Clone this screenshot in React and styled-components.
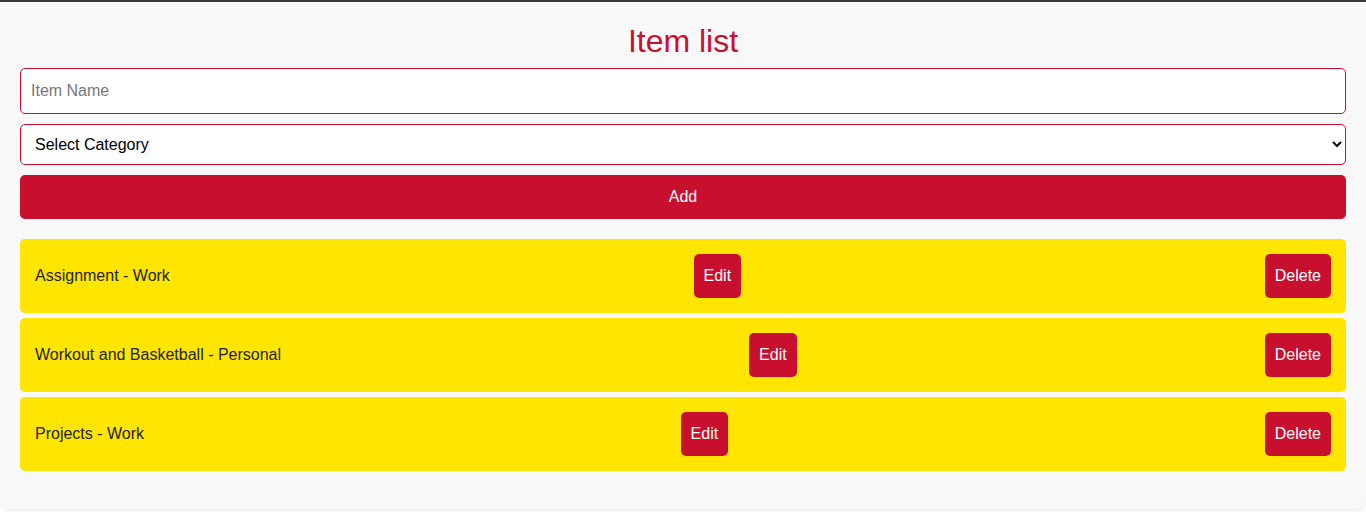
import React, { useState } from 'react';
import styled, { createGlobalStyle } from 'styled-components';

const GlobalStyle = createGlobalStyle`
  * {
    box-sizing: border-box;
  }

  body {
    margin: 0;
    background: #ffffff;
    font-family: 'Liberation Sans', Arial, sans-serif;
  }
`;

const StyledPage = styled.div`
  border-top: 2px solid #3b3b3b;
  padding-bottom: 6px;
`;

const StyledCard = styled.div`
  background: #f8f8f8;
  border-radius: 0 0 10px 10px;
  box-shadow: 0 2px 4px rgba(0, 0, 0, 0.08);
  padding: 20px 20px 38px;

  h1 {
    margin: 0 0 8px;
    color: #c8102e;
    font-size: 32px;
    font-weight: 400;
    line-height: 38px;
    text-align: center;
  }
`;

const StyledForm = styled.form`
  display: flex;
  flex-direction: column;
  gap: 10px;
  margin-bottom: 20px;
`;

const StyledInput = styled.input`
  height: 46px;
  padding: 0 10px;
  border: 1px solid #c8102e;
  border-radius: 5px;
  background: #fff;
  color: #222;
  font-family: inherit;
  font-size: 16px;
  outline: none;

  &::placeholder {
    color: #777;
  }
`;

const StyledSelect = styled.select`
  height: 41px;
  padding: 0 10px;
  border: 1px solid #c8102e;
  border-radius: 5px;
  background: #fff;
  color: #000;
  font-family: inherit;
  font-size: 16px;
  outline: none;
`;

const StyledButton = styled.button`
  height: 44px;
  padding: 0 ${({ $wide }) => ($wide ? '0' : '10px')};
  border: none;
  border-radius: 5px;
  background: #c8102e;
  color: #fff;
  font-family: inherit;
  font-size: 16px;
  cursor: pointer;
`;

const StyledList = styled.ul`
  display: flex;
  flex-direction: column;
  gap: 5px;
  margin: 0;
  padding: 0;
  list-style: none;
`;

const StyledItem = styled.li`
  display: flex;
  align-items: center;
  justify-content: space-between;
  padding: 15px;
  border-radius: 5px;
  background: #ffe500;
  color: #222;
  font-size: 16px;
`;

const initialItems = [
  { id: 1, name: 'Assignment', category: 'Work' },
  { id: 2, name: 'Workout and Basketball', category: 'Personal' },
  { id: 3, name: 'Projects', category: 'Work' },
];

const App = () => {
  const [items] = useState(initialItems);

  return (
    <StyledPage>
      <GlobalStyle />
      <StyledCard>
        <h1>Item list</h1>
        <StyledForm onSubmit={e => e.preventDefault()}>
          <StyledInput type="text" placeholder="Item Name" />
          <StyledSelect defaultValue="">
            <option value="">Select Category</option>
            <option value="Work">Work</option>
            <option value="Personal">Personal</option>
          </StyledSelect>
          <StyledButton type="submit" $wide>
            Add
          </StyledButton>
        </StyledForm>

        <StyledList>
          {items.map(item => (
            <StyledItem key={item.id}>
              <span>
                {item.name} - {item.category}
              </span>
              <StyledButton type="button">Edit</StyledButton>
              <StyledButton type="button">Delete</StyledButton>
            </StyledItem>
          ))}
        </StyledList>
      </StyledCard>
    </StyledPage>
  );
};

export default App;
